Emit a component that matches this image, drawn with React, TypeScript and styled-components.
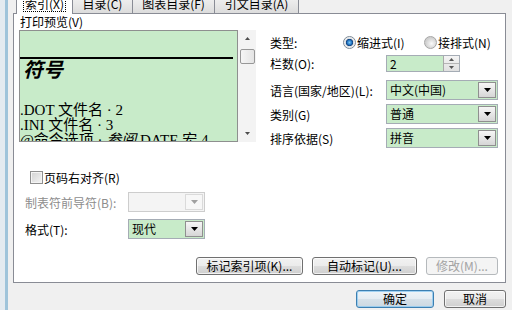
import React from "react";
import styled, { createGlobalStyle } from "styled-components";

const Global = createGlobalStyle`
  html, body { margin: 0; padding: 0; background: #f0f0f0; }
  body { width: 512px; height: 310px; overflow: hidden; }
`;

const UI = `"Noto Sans CJK SC", "Liberation Sans", sans-serif`;

const Page = styled.div`
  width: 512px;
  height: 310px;
  display: flex;
  background: #f0f0f0;
  overflow: hidden;
  font-family: ${UI};
  font-size: 12px;
  color: #000;
`;

const Frame = styled.div`
  width: 8px;
  flex: none;
  background: linear-gradient(to right, #e4ebf0 0 5px, #9fc4da 5px 8px);
`;

const Main = styled.div`
  flex: 1;
  display: flex;
  flex-direction: column;
  padding-left: 5px;
`;

const TabBar = styled.div`
  position: relative;
  z-index: 1;
  height: 14px;
  margin-bottom: -1px;
  display: flex;
  align-items: flex-end;
  padding-left: 4px;
  overflow: hidden;
`;

const Tab = styled.div<{ $w: number; $active?: boolean }>`
  box-sizing: border-box;
  flex: none;
  width: ${(p) => p.$w}px;
  height: 20px;
  margin-left: -1px;
  display: flex;
  justify-content: center;
  padding-top: 3px;
  line-height: 12px;
  border: 1px solid #898c95;
  border-bottom: ${(p) => (p.$active ? "none" : "1px solid #898c95")};
  background: ${(p) =>
    p.$active ? "#ffffff" : "linear-gradient(#f3f3f3, #e6e6e6 60%, #dcdcdc)"};
`;

const FocusText = styled.span`
  outline: 1px dotted #000;
  outline-offset: 0px;
  padding: 0 1px;
  height: 13px;
`;

const Panel = styled.div`
  box-sizing: border-box;
  width: 493px;
  height: 270px;
  background: #fff;
  border: 1px solid #898c95;
  display: flex;
  flex-direction: column;
`;

const Top = styled.div`
  height: 134px;
  display: flex;
`;

const LeftCol = styled.div`
  width: 237px;
  margin-left: 5px;
  display: flex;
  flex-direction: column;
`;

const PreviewLabel = styled.div`
  height: 16px;
  line-height: 16px;
  padding-left: 1px;
`;

const PreviewWrap = styled.div`
  height: 112px;
  display: flex;
`;

const PreviewBox = styled.div`
  box-sizing: border-box;
  width: 219px;
  height: 112px;
  border: 1px solid #8e8f8f;
  background: #c8ebc9;
  overflow: hidden;
  display: flex;
  flex-direction: column;
`;

const Rule = styled.div`
  height: 2px;
  margin: 26px 4px 0 0;
  background: #000;
  flex: none;
`;

const Heading = styled.div`
  font-family: "Liberation Serif", "Noto Sans CJK SC", serif;
  font-size: 20px;
  font-weight: bold;
  font-style: italic;
  line-height: 22px;
  padding-left: 3px;
  flex: none;
`;

const Entries = styled.div`
  margin-top: 22px;
  font-family: "Liberation Serif", "Noto Sans CJK SC", serif;
  font-size: 15px;
  line-height: 15px;
  white-space: nowrap;
  flex: none;
`;

const Entry = styled.div``;

const Em = styled.span`
  font-style: italic;
`;

const ScrollTrack = styled.div`
  width: 18px;
  height: 112px;
  background: #f3f3f3;
  display: flex;
  flex-direction: column;
  align-items: center;
`;

const ScrollArrow = styled.div`
  height: 17px;
  width: 17px;
  display: flex;
  align-items: center;
  justify-content: center;
  flex: none;
`;

const Thumb = styled.div`
  box-sizing: border-box;
  width: 15px;
  height: 15px;
  margin-top: 2px;
  border: 1px solid #979797;
  border-radius: 2px;
  background: linear-gradient(to right, #f5f5f5, #e4e4e4);
  flex: none;
`;

const Spacer = styled.div`
  flex: 1;
`;

const RightCol = styled.div`
  margin-left: 14px;
  width: 228px;
  display: flex;
  flex-direction: column;
`;

const Row = styled.div<{ $mt: number; $h: number }>`
  display: flex;
  align-items: center;
  margin-top: ${(p) => p.$mt}px;
  height: ${(p) => p.$h}px;
  flex: none;
`;

const Label = styled.div<{ $w: number; $muted?: boolean }>`
  width: ${(p) => p.$w}px;
  flex: none;
  white-space: nowrap;
  color: ${(p) => (p.$muted ? "#8d8d8d" : "#000")};
`;

const RadioItem = styled.div<{ $w: number }>`
  display: flex;
  align-items: center;
  gap: 1px;
  width: ${(p) => p.$w}px;
  flex: none;
  white-space: nowrap;
`;

const RadioDot = styled.span<{ $on?: boolean }>`
  box-sizing: border-box;
  width: 13px;
  height: 13px;
  border-radius: 50%;
  border: 1px solid ${(p) => (p.$on ? "#7d8a96" : "#a6a6a6")};
  background: ${(p) =>
    p.$on
      ? "radial-gradient(circle, #7cc8f4 0, #2577c4 2.2px, #0f3e78 3.4px, #d9dde1 3.9px, #f6f6f6 5.5px)"
      : "radial-gradient(circle at 60% 60%, #fbfbfb 0, #e4e4e4 3px, #cfcfcf 6px)"};
  flex: none;
`;

const Spin = styled.div`
  display: flex;
  height: 17px;
  width: 74px;
  box-sizing: border-box;
  border: 1px solid #a5acb5;
  background: #c8ebc9;
`;

const SpinText = styled.div`
  flex: 1;
  padding-left: 3px;
  line-height: 15px;
`;

const SpinBtns = styled.div`
  width: 15px;
  display: flex;
  flex-direction: column;
  border-left: 1px solid #a9a9a9;
  background: linear-gradient(#f4f4f4, #e0e0e0);
`;

const SpinHalf = styled.div`
  flex: 1;
  display: flex;
  align-items: center;
  justify-content: center;
  & + & {
    border-top: 1px solid #b5b5b5;
  }
`;

const SelectBox = styled.div<{ $w: number; $disabled?: boolean }>`
  box-sizing: border-box;
  width: ${(p) => p.$w}px;
  height: 20px;
  display: flex;
  border: 1px solid ${(p) => (p.$disabled ? "#cdcdcd" : "#a5acb5")};
  background: ${(p) => (p.$disabled ? "#f4f4f4" : "#c8ebc9")};
`;

const SelectText = styled.div`
  flex: 1;
  padding-left: 3px;
  line-height: 18px;
  white-space: nowrap;
`;

const DropBtn = styled.div<{ $disabled?: boolean }>`
  box-sizing: border-box;
  width: 18px;
  margin: 1px;
  display: flex;
  align-items: center;
  justify-content: center;
  border: 1px solid ${(p) => (p.$disabled ? "#dadada" : "#8f8f8f")};
  background: ${(p) =>
    p.$disabled ? "#f7f7f7" : "linear-gradient(#f6f6f6, #e6e6e6 50%, #d6d6d6)"};
`;

const BottomLeft = styled.div`
  display: flex;
  flex-direction: column;
  padding-left: 11px;
`;

const CheckRow = styled.div`
  display: flex;
  align-items: center;
  margin-top: 23px;
  height: 13px;
  padding-left: 5px;
  gap: 1px;
`;

const CheckBox = styled.span`
  box-sizing: border-box;
  width: 13px;
  height: 13px;
  border: 1px solid #8f8f8f;
  background: linear-gradient(135deg, #d2d2d2, #f4f4f4);
  box-shadow: inset 0 0 0 1px #f4f4f4;
  flex: none;
`;

const ButtonRow = styled.div`
  margin-top: 18px;
  display: flex;
  justify-content: flex-end;
  gap: 9px;
  padding-right: 7px;
`;

const Button = styled.div<{ $w: number; $disabled?: boolean; $default?: boolean }>`
  box-sizing: border-box;
  width: ${(p) => p.$w}px;
  height: 18px;
  display: flex;
  align-items: center;
  justify-content: center;
  border-radius: 3px;
  white-space: nowrap;
  line-height: 16px;
  border: 1px solid
    ${(p) => (p.$disabled ? "#b5b9bc" : p.$default ? "#3c7fb1" : "#707070")};
  color: ${(p) => (p.$disabled ? "#a3a3a3" : "#000")};
  background: ${(p) =>
    p.$disabled
      ? "#f4f4f4"
      : p.$default
      ? "linear-gradient(#eef4f8, #e4ecf2 50%, #d6e1e9 50%, #ccd8e1)"
      : "linear-gradient(#f2f2f2, #ebebeb 50%, #dddddd 50%, #cfcfcf)"};
  box-shadow: inset 0 0 0 1px
    ${(p) =>
      p.$disabled ? "transparent" : p.$default ? "rgba(140,200,240,0.8)" : "rgba(255,255,255,0.7)"};
`;

const Footer = styled.div`
  margin-top: 7px;
  display: flex;
  justify-content: flex-end;
  gap: 10px;
  padding-right: 6px;
`;

const Tri = ({ up, color = "#000", w = 7 }: { up?: boolean; color?: string; w?: number }) => (
  <svg width={w} height={Math.ceil(w / 2) + 1} viewBox={`0 0 ${w} ${Math.ceil(w / 2) + 1}`}>
    {up ? (
      <polygon points={`0,${Math.ceil(w / 2)} ${w},${Math.ceil(w / 2)} ${w / 2},0`} fill={color} />
    ) : (
      <polygon points={`0,0 ${w},0 ${w / 2},${Math.ceil(w / 2)}`} fill={color} />
    )}
  </svg>
);

const Select = ({ w, text, disabled }: { w: number; text?: string; disabled?: boolean }) => (
  <SelectBox $w={w} $disabled={disabled}>
    <SelectText>{text}</SelectText>
    <DropBtn $disabled={disabled}>
      <Tri color={disabled ? "#a0a0a0" : "#000"} />
    </DropBtn>
  </SelectBox>
);

export default function App() {
  return (
    <Page>
      <Global />
      <Frame />
      <Main>
        <TabBar>
          <Tab $w={57} $active>
            <FocusText>索引(X)</FocusText>
          </Tab>
          <Tab $w={61}>目录(C)</Tab>
          <Tab $w={83}>图表目录(F)</Tab>
          <Tab $w={85}>引文目录(A)</Tab>
        </TabBar>
        <Panel>
          <Top>
            <LeftCol>
              <PreviewLabel>打印预览(V)</PreviewLabel>
              <PreviewWrap>
                <PreviewBox>
                  <Rule />
                  <Heading>符号</Heading>
                  <Entries>
                    <Entry>.DOT 文件名 · 2</Entry>
                    <Entry>.INI 文件名 · 3</Entry>
                    <Entry>
                      @命令选项 · <Em>参阅</Em> DATE 宏 4
                    </Entry>
                  </Entries>
                </PreviewBox>
                <ScrollTrack>
                  <ScrollArrow>
                    <Tri up w={5} color="#4d4d4d" />
                  </ScrollArrow>
                  <Thumb />
                  <Spacer />
                  <ScrollArrow>
                    <Tri w={5} color="#4d4d4d" />
                  </ScrollArrow>
                </ScrollTrack>
              </PreviewWrap>
            </LeftCol>
            <RightCol>
              <Row $mt={20} $h={16}>
                <Label $w={73}>类型:</Label>
                <RadioItem $w={81}>
                  <RadioDot $on />
                  缩进式(I)
                </RadioItem>
                <RadioItem $w={72}>
                  <RadioDot />
                  接排式(N)
                </RadioItem>
              </Row>
              <Row $mt={5} $h={17}>
                <Label $w={116}>栏数(O):</Label>
                <Spin>
                  <SpinText>2</SpinText>
                  <SpinBtns>
                    <SpinHalf>
                      <Tri up w={5} color="#555" />
                    </SpinHalf>
                    <SpinHalf>
                      <Tri w={5} color="#555" />
                    </SpinHalf>
                  </SpinBtns>
                </Spin>
              </Row>
              <Row $mt={8} $h={20}>
                <Label $w={116}>语言(国家/地区)(L):</Label>
                <Select w={112} text="中文(中国)" />
              </Row>
              <Row $mt={4} $h={20}>
                <Label $w={116}>类别(G)</Label>
                <Select w={112} text="普通" />
              </Row>
              <Row $mt={4} $h={20}>
                <Label $w={116}>排序依据(S)</Label>
                <Select w={112} text="拼音" />
              </Row>
            </RightCol>
          </Top>
          <BottomLeft>
            <CheckRow>
              <CheckBox />
              页码右对齐(R)
            </CheckRow>
            <Row $mt={8} $h={20}>
              <Label $w={103} $muted>
                制表符前导符(B):
              </Label>
              <Select w={77} disabled />
            </Row>
            <Row $mt={7} $h={20}>
              <Label $w={103}>格式(T):</Label>
              <Select w={77} text="现代" />
            </Row>
          </BottomLeft>
          <ButtonRow>
            <Button $w={107}>标记索引项(K)...</Button>
            <Button $w={105}>自动标记(U)...</Button>
            <Button $w={72} $disabled>
              修改(M)...
            </Button>
          </ButtonRow>
        </Panel>
        <Footer>
          <Button $w={78} $default>
            确定
          </Button>
          <Button $w={62}>取消</Button>
        </Footer>
      </Main>
    </Page>
  );
}
